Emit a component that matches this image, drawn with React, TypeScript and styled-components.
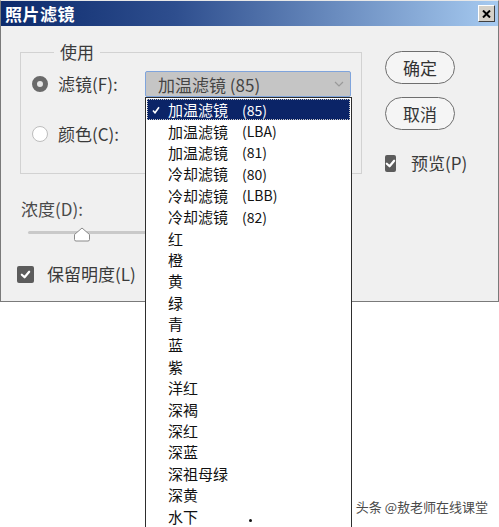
import React, { FunctionComponent } from 'react';
import styled, { createGlobalStyle } from 'styled-components';

const GlobalStyle = createGlobalStyle`
  html, body {
    margin: 0;
    background: #ffffff;
    font-family: "Noto Sans CJK SC", "Noto Sans", sans-serif;
  }
`;

const filters = [
  { id: 1, name: '加温滤镜', code: '(85)' },
  { id: 2, name: '加温滤镜', code: '(LBA)' },
  { id: 3, name: '加温滤镜', code: '(81)' },
  { id: 4, name: '冷却滤镜', code: '(80)' },
  { id: 5, name: '冷却滤镜', code: '(LBB)' },
  { id: 6, name: '冷却滤镜', code: '(82)' },
  { id: 7, name: '红' },
  { id: 8, name: '橙' },
  { id: 9, name: '黄' },
  { id: 10, name: '绿' },
  { id: 11, name: '青' },
  { id: 12, name: '蓝' },
  { id: 13, name: '紫' },
  { id: 14, name: '洋红' },
  { id: 15, name: '深褐' },
  { id: 16, name: '深红' },
  { id: 17, name: '深蓝' },
  { id: 18, name: '深祖母绿' },
  { id: 19, name: '深黄' },
  { id: 20, name: '水下' },
];

const Page = styled.div`
  position: relative;
  width: 499px;
  height: 527px;
  overflow: hidden;
  background: #ffffff;
`;

const Dialog = styled.div`
  display: flex;
  flex-direction: column;
  box-sizing: border-box;
  width: 499px;
  height: 302px;
  background: #f0f0f0;
  border: 1px solid #7a7a7a;
  border-top: 1px solid #e8e8e8;
`;

const TitleBar = styled.div`
  display: flex;
  align-items: center;
  justify-content: space-between;
  height: 25px;
  padding: 0 3px 0 4px;
  background: linear-gradient(to right, #0c2a6c 0%, #2e4e8e 35%, #a6caf0 100%);
`;

const Title = styled.span`
  color: #ffffff;
  font-size: 17px;
  font-weight: bold;
  letter-spacing: 0.5px;
`;

const CloseButton = styled.div`
  display: flex;
  align-items: center;
  justify-content: center;
  box-sizing: border-box;
  width: 17px;
  height: 17px;
  background: #d4d0c8;
  border: 1px solid;
  border-color: #ffffff #404040 #404040 #ffffff;
`;

const Body = styled.div`
  flex: 1;
  display: grid;
  grid-template-columns: 342px 70px;
  column-gap: 23px;
  padding-left: 19px;
`;

const LeftCol = styled.div`
  display: flex;
  flex-direction: column;
`;

const GroupBox = styled.fieldset`
  display: flex;
  flex-direction: column;
  gap: 24px;
  min-width: 0;
  margin: 14px 0 0 0;
  padding: 7px 0 26px 11px;
  border: 1px solid #d2d2d2;
`;

const Legend = styled.legend`
  margin-left: 22px;
  padding: 0 6px;
  font-size: 17px;
  line-height: 24px;
  color: #3a3a3a;
`;

const OptionRow = styled.div`
  display: grid;
  grid-template-columns: 16px 77px 206px;
  column-gap: 10px;
  align-items: center;
  height: 26px;
`;

const Radio = styled.span<{ checked?: boolean }>`
  box-sizing: border-box;
  width: 16px;
  height: 16px;
  border-radius: 50%;
  background: ${({ checked }) => (checked ? '#e6e6e6' : '#ffffff')};
  border: ${({ checked }) => (checked ? '5px solid #6a6a6a' : '1px solid #bdbdbd')};
`;

const Label = styled.span`
  font-size: 17px;
  line-height: 24px;
  color: #3a3a3a;
  white-space: nowrap;
`;

const SelectWrap = styled.div`
  position: relative;
  height: 26px;
`;

const SelectBox = styled.div`
  display: flex;
  align-items: center;
  justify-content: space-between;
  box-sizing: border-box;
  height: 26px;
  padding: 0 6px 0 12px;
  background: #c5c5c5;
  border: 1px solid #7fa4dc;
  border-radius: 2px;
  font-size: 17px;
  color: #454545;
`;

const DropList = styled.ul`
  position: absolute;
  top: 26px;
  left: 0;
  box-sizing: border-box;
  width: 207px;
  height: 432px;
  margin: 0;
  padding: 1px 1px 0 1px;
  list-style: none;
  background: #ffffff;
  border: 1px solid #2e2e2e;
  z-index: 2;
`;

const ListItem = styled.li<{ active?: boolean }>`
  position: relative;
  display: flex;
  align-items: center;
  box-sizing: border-box;
  height: 21.4px;
  padding-left: 21px;
  font-size: 15px;
  color: ${({ active }) => (active ? '#ffffff' : '#111111')};
  background: ${({ active }) => (active ? '#0b2467' : 'transparent')};
  outline: ${({ active }) => (active ? '1px dotted #c8c8c8' : 'none')};
  outline-offset: -1px;
`;

const Code = styled.span`
  margin-left: 14px;
  font-size: 14px;
`;

const CheckMark = styled.svg`
  position: absolute;
  left: 5px;
  top: 7px;
`;

const CursorDot = styled.span`
  position: absolute;
  left: 103px;
  top: 421px;
  width: 3px;
  height: 3px;
  border-radius: 50%;
  background: #111111;
`;

const SliderLabel = styled.div`
  margin-top: 25px;
  padding-left: 1px;
  font-size: 17px;
  line-height: 20px;
  color: #4a4a4a;
`;

const Slider = styled.div`
  position: relative;
  width: 300px;
  height: 20px;
  margin: 4px 0 0 8px;
`;

const Track = styled.div`
  margin-top: 8px;
  height: 3px;
  background: #c9c9c9;
  border-radius: 2px;
`;

const Thumb = styled.svg`
  position: absolute;
  left: 45px;
  top: 4px;
`;

const CheckRow = styled.div<{ offset?: number }>`
  display: flex;
  align-items: center;
  gap: 13px;
  margin-left: ${({ offset }) => offset || 0}px;
`;

const Checkbox = styled.span`
  display: flex;
  align-items: center;
  justify-content: center;
  width: 17px;
  height: 17px;
  border-radius: 2px;
  background: #5c5c5c;
`;

const RightCol = styled.div`
  display: flex;
  flex-direction: column;
  gap: 13px;
  padding-top: 25px;
`;

const PillButton = styled.div`
  display: flex;
  align-items: center;
  justify-content: center;
  box-sizing: border-box;
  width: 70px;
  height: 33px;
  border: 1px solid #6e6e6e;
  border-radius: 17px;
  background: #f5f5f5;
  font-size: 17px;
  color: #333333;
`;

const PreviewRow = styled(CheckRow)`
  margin-top: 8px;
  gap: 15px;
`;

const Watermark = styled.div`
  position: absolute;
  right: 11px;
  bottom: 12px;
  font-size: 13px;
  line-height: 16px;
  color: #4a4a4a;
  text-shadow: 0 0 2px #ffffff, 0 0 1px #ffffff;
  z-index: 3;
`;

const TickIcon: FunctionComponent<{ size?: number }> = ({ size = 11 }) => (
  <svg width={size} height={size} viewBox="0 0 12 12">
    <path d="M2 6.3 L5 9 L10 3" fill="none" stroke="#ffffff" strokeWidth="2.4" strokeLinecap="round" strokeLinejoin="round" />
  </svg>
);

const App: FunctionComponent = () => {
  return (
    <Page>
      <GlobalStyle />
      <Dialog>
        <TitleBar>
          <Title>照片滤镜</Title>
          <CloseButton>
            <svg width="9" height="8" viewBox="0 0 9 8">
              <path d="M1 0.5 L8 7.5 M8 0.5 L1 7.5" stroke="#000000" strokeWidth="2" />
            </svg>
          </CloseButton>
        </TitleBar>
        <Body>
          <LeftCol>
            <GroupBox>
              <Legend>使用</Legend>
              <OptionRow>
                <Radio checked />
                <Label>滤镜(F):</Label>
                <SelectWrap>
                  <SelectBox>
                    <span>加温滤镜 (85)</span>
                    <svg width="10" height="6" viewBox="0 0 10 6">
                      <path d="M1 1 L5 5 L9 1" fill="none" stroke="#9a9a9a" strokeWidth="1.2" />
                    </svg>
                  </SelectBox>
                  <DropList>
                    {filters.map(({ id, name, code }) => (
                      <ListItem key={id} active={id === 1}>
                        {id === 1 && (
                          <CheckMark width="8" height="8" viewBox="0 0 8 8">
                            <path d="M1 4.5 L3 6.8 L7 1.2" fill="none" stroke="#ffffff" strokeWidth="1.6" />
                          </CheckMark>
                        )}
                        <span>{name}</span>
                        {code && <Code>{code}</Code>}
                      </ListItem>
                    ))}
                    <CursorDot />
                  </DropList>
                </SelectWrap>
              </OptionRow>
              <OptionRow>
                <Radio />
                <Label>颜色(C):</Label>
              </OptionRow>
            </GroupBox>
            <SliderLabel>浓度(D):</SliderLabel>
            <Slider>
              <Track />
              <Thumb width="18" height="15" viewBox="0 0 18 15">
                <path d="M9 1 L16.5 7.5 L16.5 12.5 Q16.5 14 15 14 L3 14 Q1.5 14 1.5 12.5 L1.5 7.5 Z" fill="#ffffff" stroke="#8a8a8a" strokeWidth="1" />
              </Thumb>
            </Slider>
            <CheckRow offset={-3} style={{ marginTop: 19 }}>
              <Checkbox>
                <TickIcon />
              </Checkbox>
              <Label>保留明度(L)</Label>
            </CheckRow>
          </LeftCol>
          <RightCol>
            <PillButton>确定</PillButton>
            <PillButton>取消</PillButton>
            <PreviewRow>
              <Checkbox>
                <TickIcon />
              </Checkbox>
              <Label>预览(P)</Label>
            </PreviewRow>
          </RightCol>
        </Body>
      </Dialog>
      <Watermark>头条 @敖老师在线课堂</Watermark>
    </Page>
  );
};

export default App;
